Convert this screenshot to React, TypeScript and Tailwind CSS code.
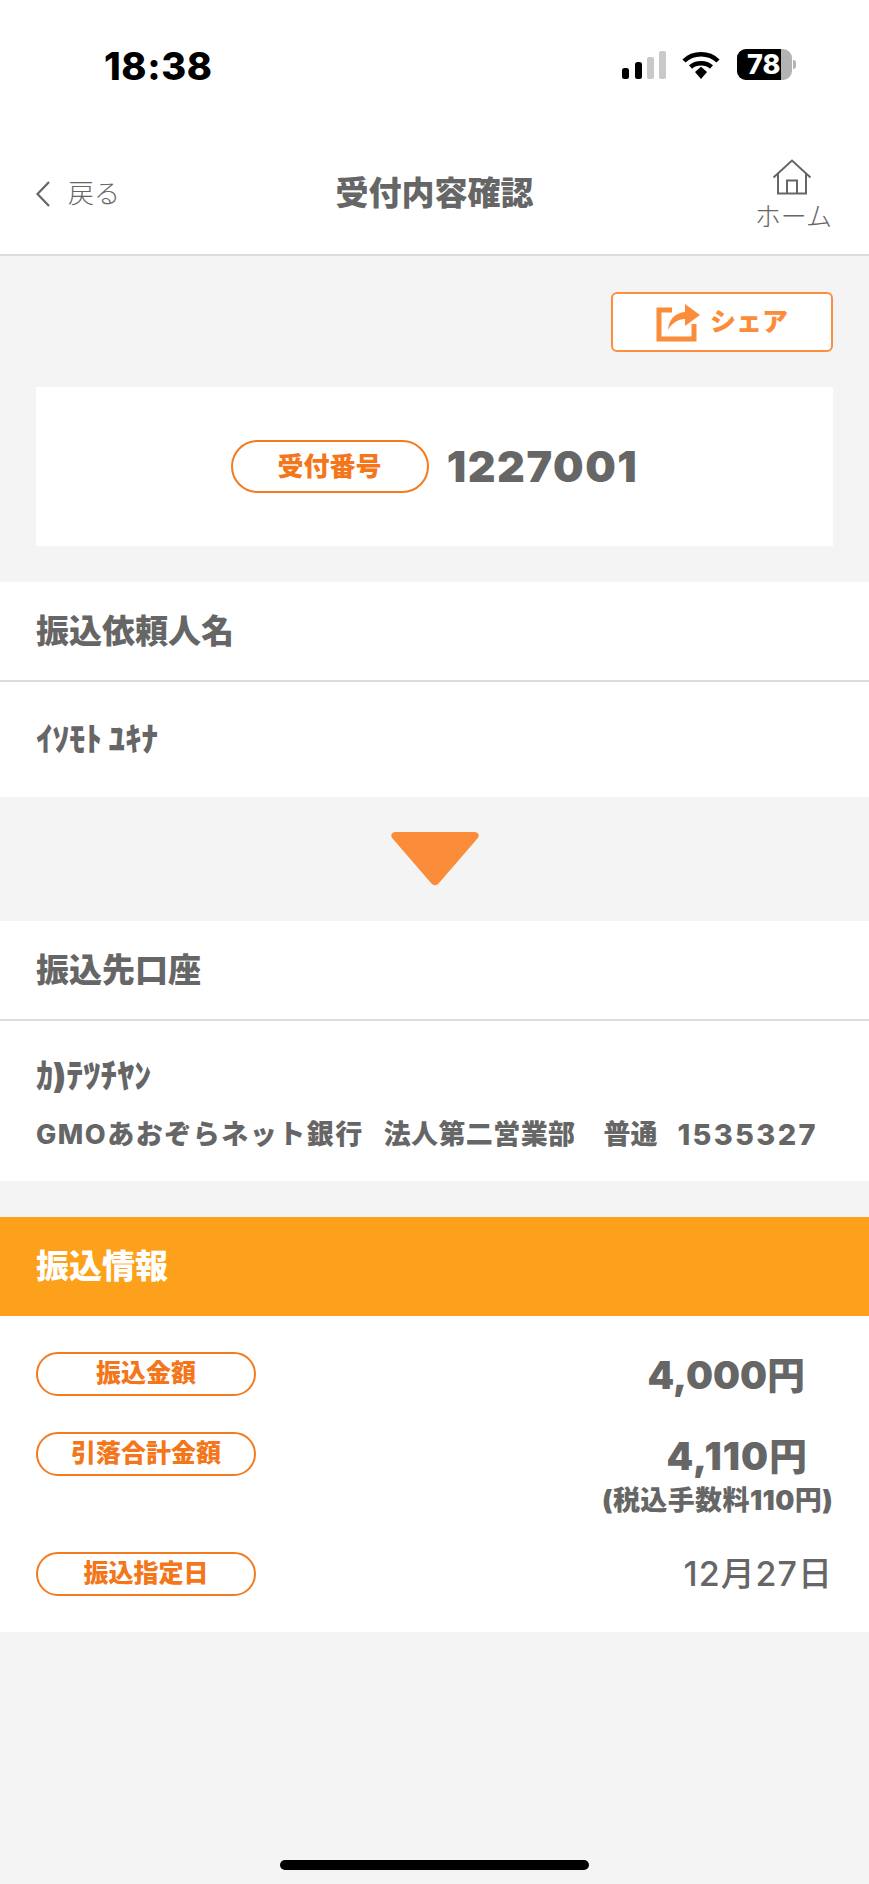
const jp = "font-['Inter','Noto_Sans_CJK_JP',sans-serif]";

function StatusBar() {
  return (
    <div className="flex h-[130px] items-start justify-between pt-[44px] pl-[104px] pr-[73px]">
      <span className="font-['Inter',sans-serif] text-[38px] leading-[44px] font-extrabold tracking-[0.6px] text-black">18:38</span>
      <div className="flex items-center pt-[5px]">
        <svg width="44" height="28" viewBox="0 0 44 28" className="mr-[16px]">
          <rect x="0" y="17" width="7" height="11" rx="2.5" fill="#000" />
          <rect x="13" y="11" width="7" height="17" rx="2.5" fill="#000" />
          <rect x="25" y="6" width="7" height="22" rx="2" fill="#c9c9c9" />
          <rect x="37" y="0" width="7" height="28" rx="2" fill="#c9c9c9" />
        </svg>
        <svg width="38" height="28" viewBox="0 0 38 28" className="mr-[17px]">
          <path d="M2 10 C11 1 27 1 36 10" fill="none" stroke="#000" strokeWidth="4.4" />
          <path d="M8.5 16 C14 11 24 11 29.5 16" fill="none" stroke="#000" strokeWidth="4.4" />
          <path d="M13 21 L19 15.8 L25 21 L19 28 Z" fill="#000" />
        </svg>
        <div className="flex items-center">
          <div className="flex h-[31px] w-[55px] overflow-hidden rounded-[9px] bg-[#b3b3b3]">
            <div className="flex h-full w-[44px] items-center bg-black pl-[10px]">
              <span className="font-['Inter',sans-serif] text-[27px] leading-none font-extrabold whitespace-nowrap text-white">78</span>
            </div>
          </div>
          <div className="ml-[1px] h-[9px] w-[3px] rounded-r-full bg-[#b3b3b3]"></div>
        </div>
      </div>
    </div>
  );
}

function NavBar() {
  return (
    <div className="relative flex h-[126px] items-start justify-between border-b-2 border-[#dcdcdc] pr-[37px] pl-[35px]">
      <div className="flex items-center gap-[17px] pt-[48px]">
        <svg width="16" height="28" viewBox="0 0 16 28">
          <path d="M14 2 L2.500 14 L14 26" fill="none" stroke="#666" strokeWidth="2.2" />
        </svg>
        <span className={`${jp} text-[26px] leading-[32px] font-light text-[#666]`}>戻る</span>
      </div>
      <h1 className={`${jp} absolute top-[43px] left-0 w-full text-center text-[33px] leading-[40px] font-black text-[#666]`}>受付内容確認</h1>
      <div className="flex flex-col items-center pt-[29px]">
        <svg width="40" height="36" viewBox="0 0 40 36" className="-translate-x-[1px]">
          <path d="M1.500 18.500 L20 1.500 L38.500 18.500 M6 14.500 V34.500 H34 V14.500 M15 34.500 V21.500 H25 V34.500" fill="none" stroke="#666" strokeWidth="2" />
        </svg>
        <span className={`${jp} mt-[6px] text-[26px] leading-[32px] font-light text-[#666]`}>ホーム</span>
      </div>
    </div>
  );
}

function Pill({ label, className }: { label: string; className: string }) {
  return (
    <div className={`${jp} flex shrink-0 items-center justify-center rounded-full border-2 border-[#f27a1f] bg-white font-black text-[#f4761b] ${className}`}>
      {label}
    </div>
  );
}

function Section({ title, children }: { title: string; children: React.ReactNode }) {
  return (
    <div className="bg-white">
      <div className={`${jp} flex h-[100px] items-center border-b-2 border-[#dcdcdc] pt-[2px] pl-[36px] text-[33px] font-black text-[#666]`}>{title}</div>
      {children}
    </div>
  );
}

function AmountRow({ label, children, className }: { label: string; children: React.ReactNode; className: string }) {
  return (
    <div className={`flex justify-between ${className}`}>
      <Pill label={label} className="h-[44px] w-[220px] text-[25px]" />
      {children}
    </div>
  );
}

export default function App() {
  return (
    <div className="flex min-h-[1884px] flex-col bg-[#f4f4f4]">
      <div className="bg-white">
        <StatusBar />
        <NavBar />
      </div>

      <div className="flex justify-end pt-[36px] pr-[36px]">
        <button className="flex h-[60px] w-[222px] items-center justify-center gap-[8px] rounded-[6px] border-2 border-[#fb8f3f] bg-white">
          <svg width="46" height="40" viewBox="0 0 46 40">
            <path d="M16 8 H3 V37 H38 V22" fill="none" stroke="#fb8c3a" strokeWidth="5" />
            <path d="M12 28 C13 17 19 11 29 10 V2 L44 13 L29 24 V17 C22 17 16 21 12 28 Z" fill="#fb8c3a" />
          </svg>
          <span className={`${jp} text-[26px] leading-none font-black text-[#fb8c3a]`}>シェア</span>
        </button>
      </div>

      <div className="mx-[36px] mt-[35px] flex h-[159px] items-center justify-center gap-[18px] bg-white">
        <Pill label="受付番号" className="h-[53px] w-[198px] text-[26px]" />
        <span className={`${jp} text-[43px] leading-none font-black tracking-[1.6px] text-[#666]`}>1227001</span>
      </div>

      <div className="mt-[36px]">
        <Section title="振込依頼人名">
          <div className={`${jp} flex h-[115px] items-center pl-[36px] text-[33px] font-black text-[#666]`}>ｲｿﾓﾄ ﾕｷﾅ</div>
        </Section>
      </div>

      <div className="flex h-[124px] items-start justify-center pt-[35px]">
        <svg width="88" height="54" viewBox="0 0 88 54">
          <path d="M5 0 H83 C88 0 89 4 86 7 L48 51 C45.500 54 42.500 54 40 51 L2 7 C-1 4 0 0 5 0 Z" fill="#fb8c3a" />
        </svg>
      </div>

      <Section title="振込先口座">
        <div className={`${jp} flex h-[160px] flex-col justify-center gap-[25px] pt-[7px] pl-[36px] text-[#666]`}>
          <div className="text-[34px] leading-[36px] font-black">ｶ)ﾃﾂﾁﾔﾝ</div>
          <div className="flex items-center text-[27px] leading-[32px] font-extrabold whitespace-nowrap">
            <span className="tracking-[1.5px]">GMOあおぞらネット銀行</span>
            <span className="ml-[20px] tracking-[0.4px]">法人第二営業部</span>
            <span className="ml-[28px]">普通</span>
            <span className="ml-[20px] text-[29px] tracking-[2.3px]">1535327</span>
          </div>
        </div>
      </Section>

      <div className={`${jp} mt-[36px] flex h-[99px] items-center bg-[#fda11c] pl-[36px] text-[33px] font-black text-white`}>振込情報</div>

      <div className="bg-white px-[36px] pt-[36px] pb-[36px] text-[#666]">
        <AmountRow label="振込金額" className="h-[80px]">
          <span className={`${jp} pt-[1px] pr-[28px] text-[38px] leading-[44px] font-black`}>4,000円</span>
        </AmountRow>
        <AmountRow label="引落合計金額" className="h-[120px]">
          <div className={`${jp} flex flex-col items-end pt-[2px] font-black`}>
            <span className="pr-[25px] text-[38px] leading-[44px] tracking-[1px]">4,110円</span>
            <span className="mt-[7px] text-[27px] leading-[32px] tracking-[0.4px]">(税込手数料110円)</span>
          </div>
        </AmountRow>
        <AmountRow label="振込指定日" className="h-[44px]">
          <span className={`${jp} text-[34px] leading-[44px] font-medium tracking-[1px]`}>12月27日</span>
        </AmountRow>
      </div>

      <div className="mt-auto flex justify-center pb-[14px]">
        <div className="h-[10px] w-[309px] rounded-full bg-black"></div>
      </div>
    </div>
  );
}
